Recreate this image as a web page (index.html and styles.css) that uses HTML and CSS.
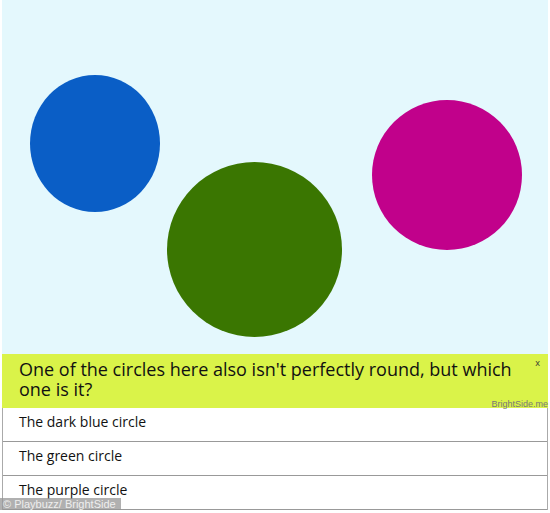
FILE: index.html
```html
<!DOCTYPE html>
<html lang="en">
<head>
  <meta charset="UTF-8">
  <title>Circles Quiz</title>
  <link rel="stylesheet" href="styles.css">
</head>
<body>

  <div class="quiz">
    <div class="picture">
      <div class="circle blue"></div>
      <div class="circle green"></div>
      <div class="circle purple"></div>
    </div>

    <div class="question">
      <p>One of the circles here also isn't perfectly round, but which one is it?</p>
      <span class="close">x</span>
      <span class="source">BrightSide.me</span>
    </div>

    <div class="answers">
      <div class="answer">The dark blue circle</div>
      <div class="answer">The green circle</div>
      <div class="answer">The purple circle</div>
    </div>

    <div class="credit">© Playbuzz/ BrightSide</div>
  </div>

</body>
</html>
```

FILE: styles.css
```css
* {
  box-sizing: border-box;
}

body {
  margin: 0;
  background: #fff;
  font-family: 'Open Sans', 'Noto Sans', sans-serif;
  color: #111;
}

.quiz {
  position: relative;
  width: 546px;
  margin-left: 2px;
}

.picture {
  position: relative;
  height: 354px;
  background: #e4f8fd;
}

.circle {
  position: absolute;
  border-radius: 50%;
}

.blue {
  left: 28px;
  top: 75px;
  width: 130px;
  height: 137px;
  background: #0a5ec6;
}

.green {
  left: 165px;
  top: 162px;
  width: 175px;
  height: 175px;
  background: #3a7601;
}

.purple {
  left: 370px;
  top: 100px;
  width: 150px;
  height: 150px;
  background: #c1018b;
}

.question {
  position: relative;
  height: 54px;
  background: #daf349;
  padding: 5px 30px 0 17px;
}

.question p {
  margin: 0;
  font-size: 18px;
  line-height: 20px;
}

.close {
  position: absolute;
  right: 8px;
  top: 2px;
  font-size: 9px;
  color: #333;
}

.source {
  position: absolute;
  right: 0;
  bottom: 0;
  font-family: 'Liberation Sans', sans-serif;
  font-size: 9px;
  line-height: 7px;
  color: #777;
}

.answers {
  border-left: 1px solid #aaa;
  border-right: 1px solid #aaa;
}

.answer {
  height: 34px;
  padding: 6px 0 0 16px;
  font-size: 14px;
  line-height: 16px;
  background: #fff;
  border-bottom: 1px solid #999;
}

.credit {
  position: absolute;
  left: -2px;
  bottom: -1px;
  padding: 0 5px 0 3px;
  font-family: 'Liberation Sans', sans-serif;
  font-size: 11px;
  line-height: 13px;
  color: #eee;
  background: rgba(150, 150, 150, 0.75);
}
```
